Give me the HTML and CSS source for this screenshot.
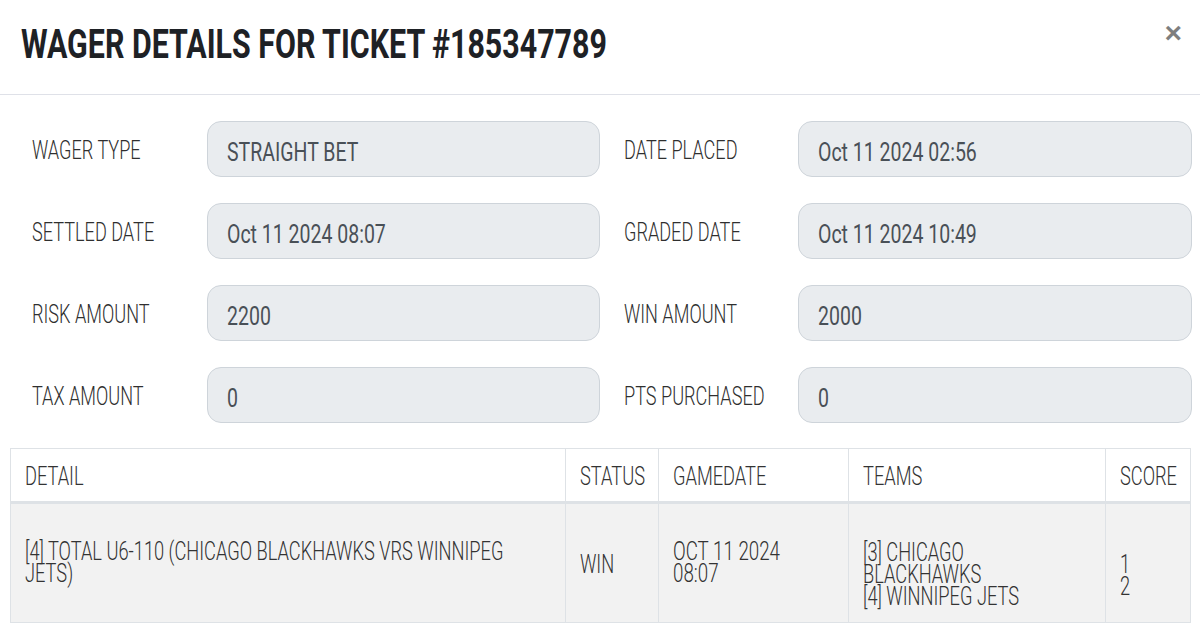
FILE: index.html
```html
<!DOCTYPE html>
<html lang="en">
<head>
<meta charset="utf-8">
<title>Wager Details</title>
<link rel="stylesheet" href="styles.css">
</head>
<body>
<div class="modal">
  <div class="modal-header">
    <h2 class="modal-title"><span class="fit">WAGER DETAILS FOR TICKET #185347789</span></h2>
    <button class="close" type="button">&times;</button>
  </div>
  <div class="modal-body">
    <div class="fields">
      <div class="label"><span class="fit">WAGER TYPE</span></div>
      <div class="value"><span class="fit">STRAIGHT BET</span></div>
      <div class="label col2"><span class="fit">DATE PLACED</span></div>
      <div class="value"><span class="fit">Oct 11 2024 02:56</span></div>
      <div class="label"><span class="fit">SETTLED DATE</span></div>
      <div class="value"><span class="fit">Oct 11 2024 08:07</span></div>
      <div class="label col2"><span class="fit">GRADED DATE</span></div>
      <div class="value"><span class="fit">Oct 11 2024 10:49</span></div>
      <div class="label"><span class="fit">RISK AMOUNT</span></div>
      <div class="value"><span class="fit">2200</span></div>
      <div class="label col2"><span class="fit">WIN AMOUNT</span></div>
      <div class="value"><span class="fit">2000</span></div>
      <div class="label"><span class="fit">TAX AMOUNT</span></div>
      <div class="value"><span class="fit">0</span></div>
      <div class="label col2"><span class="fit">PTS PURCHASED</span></div>
      <div class="value"><span class="fit">0</span></div>
    </div>
    <table class="detail-table">
      <colgroup>
        <col class="c-detail"><col class="c-status"><col class="c-date"><col class="c-teams"><col class="c-score">
      </colgroup>
      <thead>
        <tr>
          <th><span class="fit">DETAIL</span></th>
          <th><span class="fit">STATUS</span></th>
          <th><span class="fit">GAMEDATE</span></th>
          <th><span class="fit">TEAMS</span></th>
          <th><span class="fit">SCORE</span></th>
        </tr>
      </thead>
      <tbody>
        <tr class="body-row">
          <td class="detail"><span class="fit-block">[4] TOTAL U6-110 (CHICAGO BLACKHAWKS VRS WINNIPEG JETS)</span></td>
          <td class="status"><span class="fit-block">WIN</span></td>
          <td class="gamedate"><span class="fit-block">OCT 11 2024<br>08:07</span></td>
          <td class="teams"><span class="fit-block">[3] CHICAGO BLACKHAWKS<br>[4] WINNIPEG JETS</span></td>
          <td class="score"><span class="fit-block">1<br>2</span></td>
        </tr>
      </tbody>
    </table>
  </div>
</div>
</body>
</html>
```
FILE: styles.css
```css
html, body {
  margin: 0;
  background: #ffffff;
  overflow: hidden;
}
body {
  font-family: "Roboto", "Liberation Sans", sans-serif;
  color: #333333;
  --sx: 0.725;
}
.fit {
  display: inline-block;
  white-space: nowrap;
  transform: scaleX(var(--sx));
  transform-origin: 0 50%;
}
.fit-block {
  display: block;
  width: calc(100% / var(--sx));
  transform: scaleX(var(--sx));
  transform-origin: 0 50%;
}
.modal-header {
  height: 95px;
  box-sizing: border-box;
  border-bottom: 1px solid #dfe1e8;
  display: flex;
  align-items: center;
  justify-content: space-between;
  padding: 0 18px 5px 21px;
}
.modal-title {
  --sx: 0.741;
  flex: 1;
  margin: 0;
  font-size: 41px;
  font-weight: 700;
  color: #1e2125;
  line-height: 1;
}
.close {
  align-self: flex-start;
  margin-top: 18px;
  padding: 0;
  background: none;
  border: 0;
  font-family: "Liberation Sans", Arial, sans-serif;
  font-size: 30px;
  font-weight: 700;
  line-height: 1;
  color: #000000;
  opacity: 0.5;
}
.modal-body {
  padding: 26px 8px 14px 10px;
}
.fields {
  display: grid;
  grid-template-columns: 175px 393px 198px 394px;
  row-gap: 26px;
  padding-left: 22px;
  margin-bottom: 25px;
}
.label {
  align-self: center;
  font-size: 25px;
  font-weight: 300;
  color: #2f2f2f;
  line-height: 1;
  padding-top: 2px;
}
.label.col2 {
  padding-left: 24px;
}
.value {
  --sx: 0.75;
  height: 56px;
  box-sizing: border-box;
  border: 1px solid #ced4da;
  border-radius: 14px;
  background: #e9ecef;
  color: #495057;
  font-size: 26px;
  line-height: 1;
  padding: 5px 19px 0;
  display: flex;
  align-items: center;
}
.detail-table {
  --sx: 0.73;
  width: 1180px;
  border-collapse: collapse;
  table-layout: fixed;
  font-size: 25px;
  font-weight: 300;
  color: #333333;
}
.c-detail { width: 555px; }
.c-status { width: 93px; }
.c-date { width: 190px; }
.c-teams { width: 257px; }
.c-score { width: 85px; }
.detail-table th,
.detail-table td {
  border: 1px solid #dee2e6;
  padding: 0 14px;
  text-align: left;
  vertical-align: middle;
  line-height: 22px;
}
.detail-table th {
  height: 49px;
  padding-top: 3px;
  font-weight: 300;
  border-bottom: 3px solid #dee2e6;
  background: #ffffff;
}
.detail-table .body-row {
  height: 120px;
}
.detail-table td {
  background: #f2f2f2;
}
.detail-table td.detail {
  padding-right: 30px;
}
.detail-table td.status {
  padding-top: 4px;
}
.detail-table td.gamedate {
  --sx: 0.75;
}
.detail-table td.teams {
  vertical-align: top;
  padding-top: 38px;
  padding-right: 30px;
}
.detail-table td.score {
  vertical-align: top;
  padding-top: 50px;
}
```
